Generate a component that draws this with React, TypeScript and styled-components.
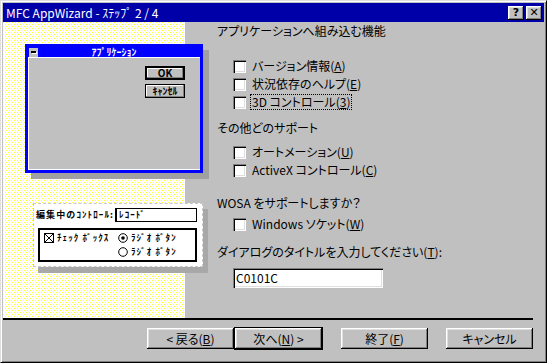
import styled, { createGlobalStyle } from "styled-components";

const GlobalStyle = createGlobalStyle`
  body {
    margin: 0;
    background: #c0c0c0;
  }
`;

const FONT = `"Noto Sans CJK JP", "DejaVu Sans", sans-serif`;

// yellow dot screen behind the illustration (vector pattern, not a bitmap)
const DOTS =
  "data:image/svg+xml," +
  encodeURIComponent(
    `<svg xmlns="http://www.w3.org/2000/svg" width="3" height="4" shape-rendering="crispEdges"><rect x="0" y="0" width="1" height="1" fill="#ffff30"/><rect x="2" y="2" width="1" height="1" fill="#ffff30"/></svg>`
  );

const raised = `
  box-shadow: inset -1px -1px #000, inset 1px 1px #fff,
    inset -2px -2px #808080, inset 2px 2px #dfdfdf;
`;
const sunken = `
  box-shadow: inset 1px 1px #808080, inset 2px 2px #000,
    inset -1px -1px #fff, inset -2px -2px #dfdfdf;
`;

type Check = { label: string; key: string; rest: string; focus?: boolean };

const featureChecks: Check[] = [
  { label: "バージョン情報(", key: "A", rest: ")" },
  { label: "状況依存のヘルプ(", key: "E", rest: ")" },
  { label: "3D コントロール(", key: "3", rest: ")", focus: true },
];
const supportChecks: Check[] = [
  { label: "オートメーション(", key: "U", rest: ")" },
  { label: "ActiveX コントロール(", key: "C", rest: ")" },
];

const App = () => {
  return (
    <>
      <GlobalStyle />
      <Window>
        <TitleBar>
          <TitleText>MFC AppWizard - ｽﾃｯﾌﾟ 2 / 4</TitleText>
          <TitleButtons>
            <CaptionBtn>?</CaptionBtn>
            <CaptionBtn>✕</CaptionBtn>
          </TitleButtons>
        </TitleBar>

        <Main>
          <Picture>
            <MiniDialog>
              <MiniTitle>
                <SysBox>
                  <SysDash />
                </SysBox>
                <MiniTitleText>ｱﾌﾟﾘｹｰｼｮﾝ</MiniTitleText>
              </MiniTitle>
              <MiniBody>
                <MiniBtn $default>OK</MiniBtn>
                <MiniBtn>ｷｬﾝｾﾙ</MiniBtn>
              </MiniBody>
            </MiniDialog>

            <Callout>
              <CalloutHead>
                <PixLabel>編集中のｺﾝﾄﾛｰﾙ:</PixLabel>
                <PixField>ﾚｺｰﾄﾞ</PixField>
              </CalloutHead>
              <PixGroup>
                <PixItem>
                  <PixCheck>
                    <svg width="10" height="10" viewBox="0 0 10 10">
                      <rect x="0.5" y="0.5" width="9" height="9" fill="#fff" stroke="#000" />
                      <path d="M1 1 L9 9 M9 1 L1 9" stroke="#000" />
                    </svg>
                  </PixCheck>
                  <PixLabel>ﾁｪｯｸ ﾎﾞｯｸｽ</PixLabel>
                </PixItem>
                <PixRadios>
                  <PixItem>
                    <svg width="10" height="10" viewBox="0 0 10 10">
                      <circle cx="5" cy="5" r="4.3" fill="#fff" stroke="#000" />
                      <circle cx="5" cy="5" r="1.8" fill="#000" />
                    </svg>
                    <PixLabel>ﾗｼﾞｵ ﾎﾞﾀﾝ</PixLabel>
                  </PixItem>
                  <PixItem>
                    <svg width="10" height="10" viewBox="0 0 10 10">
                      <circle cx="5" cy="5" r="4.3" fill="#fff" stroke="#000" />
                    </svg>
                    <PixLabel>ﾗｼﾞｵ ﾎﾞﾀﾝ</PixLabel>
                  </PixItem>
                </PixRadios>
              </PixGroup>
            </Callout>
          </Picture>

          <Options>
            <Heading $mt={2}>アプリケーションへ組み込む機能</Heading>
            <CheckList $mt={19}>
              {featureChecks.map((c) => (
                <CheckRow key={c.key}>
                  <CheckBox />
                  <CheckText $focus={c.focus}>
                    {c.label}
                    <U>{c.key}</U>
                    {c.rest}
                  </CheckText>
                </CheckRow>
              ))}
            </CheckList>

            <Heading $mt={10}>その他どのサポート</Heading>
            <CheckList $mt={8}>
              {supportChecks.map((c) => (
                <CheckRow key={c.key}>
                  <CheckBox />
                  <CheckText>
                    {c.label}
                    <U>{c.key}</U>
                    {c.rest}
                  </CheckText>
                </CheckRow>
              ))}
            </CheckList>

            <Heading $mt={17}>WOSA をサポートしますか？</Heading>
            <CheckList $mt={5}>
              <CheckRow>
                <CheckBox />
                <CheckText>
                  Windows ソケット(<U>W</U>)
                </CheckText>
              </CheckRow>
            </CheckList>

            <Heading $mt={12}>
              ダイアログのタイトルを入力してください(<U>T</U>):
            </Heading>
            <TextInput>C0101C</TextInput>
          </Options>
        </Main>

        <Separator />

        <Buttons>
          <PushBtn>&lt; 戻る(<U>B</U>)</PushBtn>
          <PushBtn $default>
            次へ(<U>N</U>) &gt;
          </PushBtn>
          <PushBtn $gap>
            終了(<U>F</U>)
          </PushBtn>
          <PushBtn $gap>キャンセル</PushBtn>
        </Buttons>
      </Window>
    </>
  );
};

export default App;

/* window frame */
const Window = styled.div`
  width: 547px;
  height: 363px;
  box-sizing: border-box;
  background: #c0c0c0;
  border-top: 1px solid #dfdfdf;
  border-left: 1px solid #dfdfdf;
  border-right: 1px solid #000;
  border-bottom: 1px solid #000;
  box-shadow: inset 1px 1px #fff, inset -1px -1px #808080;
  padding: 2px;
  display: flex;
  flex-direction: column;
  font-family: ${FONT};
  font-size: 12px;
  font-feature-settings: "palt";
  color: #000;
`;
const TitleBar = styled.div`
  height: 19px;
  background: #0000a8;
  color: #fff;
  display: flex;
  align-items: center;
  justify-content: space-between;
  padding: 0 2px 0 3px;
`;
const TitleText = styled.div`
  font-size: 12px;
  line-height: 14px;
`;
const TitleButtons = styled.div`
  display: flex;
  gap: 2px;
`;
const CaptionBtn = styled.div`
  width: 16px;
  height: 14px;
  background: #c0c0c0;
  ${raised}
  color: #000;
  font-family: "DejaVu Sans", sans-serif;
  font-weight: 700;
  font-size: 11px;
  line-height: 14px;
  text-align: center;
`;
const Main = styled.div`
  display: flex;
  height: 296px;
`;

/* left illustration */
const Picture = styled.div`
  width: 181px;
  flex-shrink: 0;
  border-right: 1px solid #fff;
  background: #fff url("${DOTS}") 0 0 / 3px 4px repeat;
  display: flex;
  flex-direction: column;
  align-items: flex-start;
  position: relative;
  z-index: 1;
  font-feature-settings: normal;
`;
const MiniDialog = styled.div`
  margin: 22px 0 0 22px;
  width: 178px;
  height: 129px;
  flex-shrink: 0;
  box-sizing: border-box;
  border: 3px solid #0000ff;
  background: #c0c0c0;
  box-shadow: 6px 6px 0 #a0a0a0;
  display: flex;
  flex-direction: column;
`;
const MiniTitle = styled.div`
  height: 10px;
  background: #0000ff;
  border-bottom: 1px solid #fff;
  display: flex;
  align-items: center;
`;
const SysBox = styled.div`
  width: 9px;
  height: 9px;
  background: #c0c0c0;
  margin-left: 1px;
  display: flex;
  align-items: center;
  justify-content: center;
`;
const SysDash = styled.div`
  width: 5px;
  height: 2px;
  background: #000;
  box-shadow: 1px 1px #fff;
`;
const MiniTitleText = styled.div`
  flex: 1;
  text-align: center;
  color: #fff;
  font-size: 10px;
  font-weight: 700;
  line-height: 10px;
  padding-right: 10px;
`;
const MiniBody = styled.div`
  flex: 1;
  border-left: 1px solid #fff;
  border-bottom: 1px solid #fff;
  display: flex;
  flex-direction: column;
  align-items: flex-end;
  gap: 4px;
  padding: 8px 15px 0 0;
`;
const MiniBtn = styled.div<{ $default?: boolean }>`
  width: 40px;
  height: 14px;
  box-sizing: border-box;
  background: #c0c0c0;
  border: ${(p) => (p.$default ? "2px" : "1px")} solid #000;
  box-shadow: inset -1px -1px #808080, inset 1px 1px #fff;
  font-size: 10px;
  font-weight: 700;
  line-height: ${(p) => (p.$default ? "10px" : "12px")};
  text-align: center;
`;
const Callout = styled.div`
  margin: 30px 0 0 30px;
  width: 170px;
  height: 64px;
  flex-shrink: 0;
  box-sizing: border-box;
  background: #fff;
  border: 1px dashed #c8c8c8;
  box-shadow: 5px 6px 0 #a8a8a8;
  padding: 4px 5px 0 2px;
  display: flex;
  flex-direction: column;
  gap: 6px;
`;
const CalloutHead = styled.div`
  display: flex;
  align-items: center;
  gap: 1px;
`;
const PixLabel = styled.span`
  font-size: 9px;
  font-weight: 700;
  line-height: 12px;
  letter-spacing: 1.1px;
  white-space: nowrap;
`;
const PixField = styled.div`
  flex: 1;
  height: 12px;
  border: 1px solid #000;
  border-left-width: 2px;
  font-size: 9px;
  font-weight: 700;
  letter-spacing: 1.1px;
  line-height: 12px;
  padding-left: 2px;
`;
const PixGroup = styled.div`
  height: 34px;
  box-sizing: border-box;
  margin-left: 2px;
  border: 2px solid #000;
  display: grid;
  grid-template-columns: 74px auto;
  align-items: start;
  padding: 2px 0 0 4px;
`;
const PixRadios = styled.div`
  display: flex;
  flex-direction: column;
  gap: 2px;
`;
const PixItem = styled.div`
  display: flex;
  align-items: center;
  gap: 3px;
  height: 12px;
`;
const PixCheck = styled.span`
  display: flex;
`;

/* right options */
const Options = styled.div`
  flex: 1;
  padding-left: 32px;
  display: flex;
  flex-direction: column;
  align-items: flex-start;
`;
const Heading = styled.div<{ $mt: number }>`
  margin-top: ${(p) => p.$mt}px;
  line-height: 14px;
  height: 14px;
  white-space: nowrap;
`;
const CheckList = styled.div<{ $mt: number }>`
  margin-top: ${(p) => p.$mt}px;
  padding-left: 16px;
  display: flex;
  flex-direction: column;
`;
const CheckRow = styled.div`
  height: 18px;
  display: flex;
  align-items: center;
  gap: 4px;
`;
const CheckBox = styled.div`
  width: 13px;
  height: 13px;
  background: #fff;
  ${sunken}
`;
const CheckText = styled.span<{ $focus?: boolean }>`
  line-height: 14px;
  padding: 0 1px;
  border: 1px ${(p) => (p.$focus ? "dotted #000" : "solid transparent")};
  white-space: nowrap;
`;
const U = styled.span`
  text-decoration: underline;
`;
const TextInput = styled.div`
  margin: 9px 0 0 16px;
  width: 150px;
  height: 20px;
  box-sizing: border-box;
  background: #fff;
  ${sunken}
  padding-left: 3px;
  line-height: 20px;
`;

/* bottom */
const Separator = styled.div`
  height: 2px;
  background: #000;
  margin-right: 11px;
`;
const Buttons = styled.div`
  display: flex;
  justify-content: flex-end;
  align-items: flex-start;
  padding: 8px 11px 0 0;
`;
const PushBtn = styled.div<{ $default?: boolean; $gap?: boolean }>`
  width: ${(p) => (p.$default ? "89px" : "87px")};
  height: ${(p) => (p.$default ? "23px" : "21px")};
  margin-top: ${(p) => (p.$default ? "-1px" : "0")};
  margin-left: ${(p) => (p.$gap ? "18px" : "0")};
  box-sizing: border-box;
  background: #c0c0c0;
  border: ${(p) => (p.$default ? "1px solid #000" : "none")};
  ${raised}
  display: flex;
  align-items: center;
  justify-content: center;
  line-height: 14px;
  white-space: nowrap;
`;
